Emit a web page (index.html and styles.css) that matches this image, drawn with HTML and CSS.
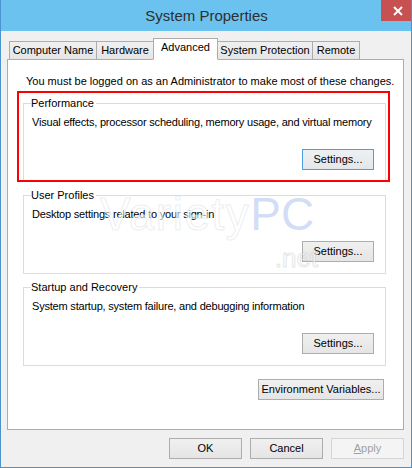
FILE: index.html
```html
<!DOCTYPE html>
<html lang="en">
<head>
<meta charset="utf-8">
<title>System Properties</title>
<link rel="stylesheet" href="styles.css">
</head>
<body>
<div class="window">
  <div class="titlebar">
    <div class="title-spacer"></div>
    <div class="title">System Properties</div>
    <div class="close"><svg width="10" height="10" viewBox="0 0 10 10"><path d="M1 1 L9 9 M9 1 L1 9" stroke="#fff" stroke-width="2" fill="none"/></svg></div>
  </div>
  <div class="body">
    <div class="tabs">
      <div class="tab tab-cn">Computer Name</div>
      <div class="tab tab-hw">Hardware</div>
      <div class="tab tab-adv selected">Advanced</div>
      <div class="tab tab-sp">System Protection</div>
      <div class="tab tab-rm">Remote</div>
    </div>
    <div class="panel">
      <p class="note">You must be logged on as an Administrator to make most of these changes.</p>
      <div class="annot">
        <fieldset class="group">
          <legend>Performance</legend>
          <p class="desc">Visual effects, processor scheduling, memory usage, and virtual memory</p>
          <div class="group-actions"><button class="btn btn-settings focused">Settings...</button></div>
        </fieldset>
      </div>
      <fieldset class="group group-next">
        <legend>User Profiles</legend>
        <p class="desc">Desktop settings related to your sign-in</p>
        <div class="group-actions"><button class="btn btn-settings">Settings...</button></div>
      </fieldset>
      <fieldset class="group group-next">
        <legend>Startup and Recovery</legend>
        <p class="desc">System startup, system failure, and debugging information</p>
        <div class="group-actions"><button class="btn btn-settings">Settings...</button></div>
      </fieldset>
      <div class="env-row"><button class="btn btn-env">Environment Variables...</button></div>
      <div class="watermark" aria-hidden="true"><span class="wm-variety">Variety</span><span class="wm-pc">PC</span><span class="wm-net">.net</span></div>
    </div>
    <div class="footer">
      <button class="btn btn-dlg">OK</button>
      <button class="btn btn-dlg">Cancel</button>
      <button class="btn btn-dlg disabled"><u>A</u>pply</button>
    </div>
  </div>
</div>
</body>
</html>
```
FILE: styles.css
```css
* { box-sizing: border-box; }
html, body { margin: 0; padding: 0; }
body {
  width: 412px;
  height: 468px;
  overflow: hidden;
  font-family: "Liberation Sans", Arial, sans-serif;
  font-size: 11px;
  color: #000;
  background: #f0f0f0;
}
.window {
  width: 412px;
  height: 468px;
  border: 1px solid #4a93cc;
  border-top: none;
  background: #f0f0f0;
  display: flex;
  flex-direction: column;
}
.titlebar {
  height: 31px;
  background: #6bc2ee;
  display: grid;
  grid-template-columns: 1fr auto 1fr;
  align-items: start;
}
.title {
  font-size: 15px;
  line-height: 31px;
  color: #2f2f2f;
  padding-left: 1px;
}
.close {
  justify-self: end;
  width: 30px;
  height: 21px;
  background: #c75050;
  display: flex;
  align-items: center;
  justify-content: center;
  padding-left: 3px;
}
.close svg { display: block; }
.body {
  flex: 1;
  display: flex;
  flex-direction: column;
  padding: 7px 7px 0 6px;
}
.tabs {
  display: flex;
  align-items: flex-end;
  margin-left: 2px;
  position: relative;
  z-index: 1;
}
.tab {
  height: 19px;
  border: 1px solid #acacac;
  background: linear-gradient(#f0f0f0, #e5e5e5);
  text-align: center;
  line-height: 17px;
  white-space: nowrap;
  margin-left: -1px;
}
.tab:first-child { margin-left: 0; }
.tab.selected {
  height: 22px;
  background: #fff;
  border-bottom-color: #fff;
  line-height: 17px;
  position: relative;
  z-index: 2;
}
.tab-cn { width: 88px; }
.tab-hw { width: 58px; }
.tab-adv { width: 65px; }
.tab-sp { width: 96px; }
.tab-rm { width: 48px; }
.panel {
  position: relative;
  margin-top: -1px;
  height: 371px;
  border: 1px solid #acacac;
  background: #fff;
  padding: 14px 17px 0 15px;
  display: flex;
  flex-direction: column;
}
.note {
  margin: 0 0 7px 3px;
  line-height: 15px;
  white-space: nowrap;
}
.annot { position: relative; }
.annot::after {
  content: "";
  position: absolute;
  left: -6px;
  top: -5px;
  right: -4px;
  bottom: 0;
  border: 2px solid #ff0000;
  pointer-events: none;
}
.group {
  margin: 0;
  padding: 0 11px 11px 7px;
  border: 1px solid #dcdcdc;
  min-width: 0;
}
.group-next { margin-top: 6px; }
.group legend {
  padding: 0 2px 0 0;
  line-height: 15px;
}
.desc {
  margin: 4px 0 0 1px;
  line-height: 15px;
  white-space: nowrap;
  letter-spacing: -0.2px;
}
.group-actions {
  display: flex;
  justify-content: flex-end;
  margin-top: 19px;
}
.btn {
  font-family: inherit;
  font-size: 11px;
  color: #000;
  height: 21px;
  padding: 0;
  margin: 0;
  border: 1px solid #adadad;
  background: linear-gradient(#f0f0f0, #e5e5e5);
  line-height: 19px;
  white-space: nowrap;
}
.btn.focused {
  border-color: #4d9de5;
  background: linear-gradient(#eef1f4, #e4e7ea);
}
.btn-settings { width: 72px; }
.env-row {
  display: flex;
  justify-content: flex-end;
  margin-top: 13px;
  padding-right: 2px;
}
.btn-env { width: 126px; }
.footer {
  display: flex;
  justify-content: flex-end;
  gap: 8px;
  margin-top: 8px;
}
.btn-dlg { width: 73px; }
.btn.disabled {
  color: #a0a0a0;
  border-color: #d5d5d5;
  background: #f4f4f4;
}
.watermark {
  position: absolute;
  left: 92px;
  top: 131px;
  font-family: "Liberation Sans", Arial, sans-serif;
  font-size: 46px;
  line-height: 46px;
  white-space: nowrap;
  pointer-events: none;
}
.wm-variety {
  color: rgba(255,255,255,0.6);
  -webkit-text-stroke: 1px rgba(200,205,215,0.35);
  letter-spacing: 1.5px;
}
.wm-pc {
  color: rgba(150,180,235,0.45);
}
.wm-net {
  font-size: 26px;
  color: rgba(255,255,255,0.5);
  -webkit-text-stroke: 1px rgba(190,190,190,0.4);
  position: absolute;
  right: -4px;
  top: 44px;
}
```
